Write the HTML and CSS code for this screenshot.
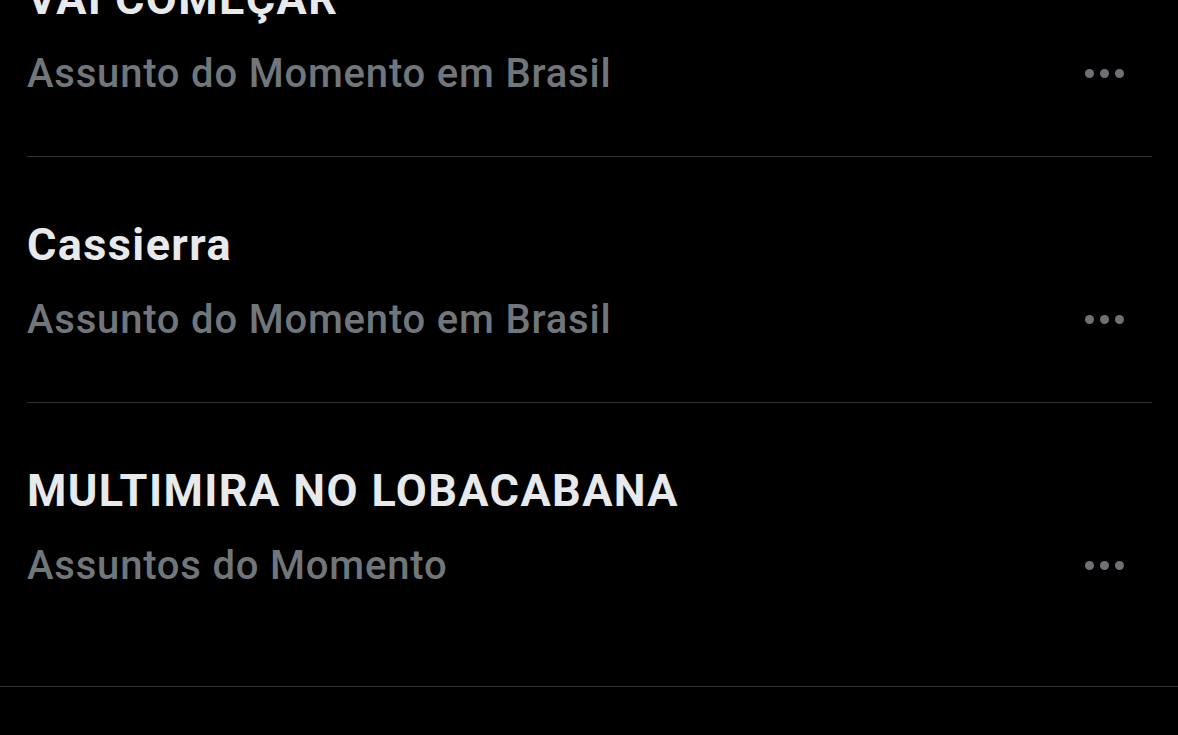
FILE: index.html
```html
<!DOCTYPE html>
<html lang="pt-BR">
<head>
  <meta charset="UTF-8">
  <meta name="viewport" content="width=device-width, initial-scale=1">
  <title>Assuntos do Momento</title>
  <link rel="stylesheet" href="styles.css">
</head>
<body>
  <section class="trends">
    <div class="trend">
      <div class="trend-title">VAI COMEÇAR</div>
      <div class="trend-row">
        <span class="trend-meta">Assunto do Momento em Brasil</span>
        <button class="more" aria-label="Mais"><i></i><i></i><i></i></button>
      </div>
    </div>
    <div class="trend">
      <div class="trend-title">Cassierra</div>
      <div class="trend-row">
        <span class="trend-meta">Assunto do Momento em Brasil</span>
        <button class="more" aria-label="Mais"><i></i><i></i><i></i></button>
      </div>
    </div>
    <div class="trend">
      <div class="trend-title">MULTIMIRA NO LOBACABANA</div>
      <div class="trend-row">
        <span class="trend-meta">Assuntos do Momento</span>
        <button class="more" aria-label="Mais"><i></i><i></i><i></i></button>
      </div>
    </div>
  </section>
  <section class="next">
    <h2>Quem seguir</h2>
  </section>
</body>
</html>
```

FILE: styles.css
```css
body { margin: 0; background: #000; font-family: Roboto, "Noto Sans", sans-serif; overflow: hidden; }
.trends { margin-top: -89px; }
.trend { margin: 0 26px 0 27px; padding: 62px 0 58px; border-bottom: 1px solid #2f3336; }
.trend:last-child { border-bottom: none; padding-bottom: 96px; }
.trend-title { font-size: 45px; line-height: 52px; font-weight: 700; letter-spacing: 1.4px; color: #e7e9ea; }
.trend-row { display: flex; align-items: center; justify-content: space-between; margin-top: 25px; }
.trend-meta { font-size: 40px; line-height: 48px; font-weight: 500; letter-spacing: 0.8px; color: #71767b; }
.more { display: flex; gap: 6px; background: none; border: none; padding: 0; margin: -2px 28px 0 0; cursor: pointer; }
.more i { width: 9px; height: 9px; border-radius: 50%; background: #6e7277; }
.next { border-top: 1px solid #2f3336; padding: 56px 27px 0; }
.next h2 { margin: 0; font-size: 44px; color: #e7e9ea; }
```
